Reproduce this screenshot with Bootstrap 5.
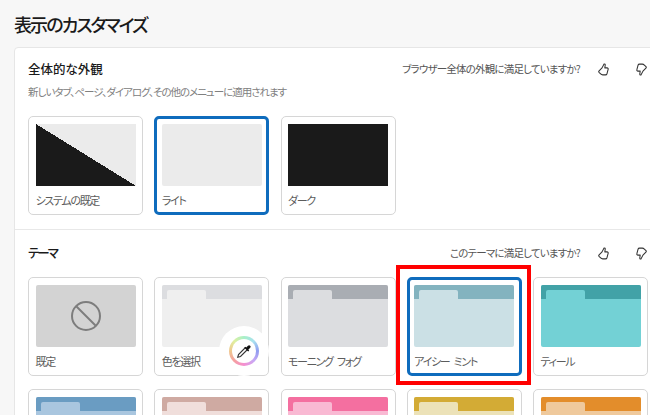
<!DOCTYPE html>
<html lang="ja">
<head>
  <meta charset="UTF-8" />
  <meta name="viewport" content="width=device-width,initial-scale=1" />
  <title>表示のカスタマイズ</title>
  <link href="https://cdn.jsdelivr.net/npm/bootstrap@5.3.0/dist/css/bootstrap.min.css" rel="stylesheet" />
  <style>
    html, body { height: 415px; overflow: hidden; }
    body {
      background: #f7f7f7;
      color: #1a1a1a;
      font-family: "Noto Sans CJK JP", "Liberation Sans", sans-serif;
      font-feature-settings: "palt";
      padding: 0 0 0 14px;
      width: 664px;
    }
    .page-title { font-size: 18px; font-weight: 500; letter-spacing: -1.9px; line-height: 28px; margin: 0; padding: 10px 0 9px; }
    .panel { background: #fff; border: 1px solid #e6e6e6; border-radius: 4px 0 0 0; width: 650px; }
    .panel-part { padding: 12px 15px 14px 13px; }
    .panel-part + .panel-part { border-top: 1px solid #e8e8e8; padding-top: 14px; }
    .part-title { font-size: 12.5px; font-weight: 500; line-height: 18px; margin: 0; }
    .part-title-tight { letter-spacing: -2px; }
    .part-note { color: #808080; font-size: 10.5px; letter-spacing: -1.03px; line-height: 16px; margin: 6px 0 0; }
    .ask { color: #555; font-size: 10.5px; letter-spacing: -.8px; line-height: 18px; }
    .thumbs { gap: 27px; margin: 0 1px 0 18px; }
    .thumbs svg { display: block; height: 13px; width: 11px; }
    .tiles { display: grid; grid-template-columns: repeat(5, 115px); column-gap: 11.25px; row-gap: 13px; margin-top: 15px; }
    .tiles-top { margin-top: 16px; }
    .tile { background: #fff; border: 1px solid #d6d6d6; border-radius: 5px; height: 99px; padding: 7px 6.5px; position: relative; }
    .tile-on { border: 3px solid #0f6cbd; padding: 5px 4.5px; }
    .tile-img { border-radius: 2px; height: 62px; overflow: hidden; }
    .tile-name { color: #5c5c5c; font-size: 11px; letter-spacing: -1.3px; line-height: 16px; margin-top: 6px; white-space: nowrap; word-spacing: 3px; }
    .img-system { background: linear-gradient(to top right, #1a1a1a 50%, #ebebeb 50%); border-radius: 0; }
    .img-light { background: #ebebeb; }
    .img-dark { background: #1a1a1a; border-radius: 0; }
    .img-none { align-items: center; background: #d3d3d3; display: flex; justify-content: center; }
    .img-none svg { height: 32px; width: 32px; }
    .folder-band { height: 14px; padding: 5px 0 0 5px; }
    .folder-tab { border-radius: 2px 2px 0 0; height: 9px; width: 39px; }
    .picker-cut { background: #fff; border-radius: 50%; height: 50px; position: absolute; right: -1px; bottom: -1px; width: 50px; }
    .picker-ring {
      align-items: center;
      background: conic-gradient(#a8f0c8, #a8e0f0, #8f9cf0, #c8a8f5, #f58fd0, #f5a0a0, #f0c890, #e0f0a0, #a8f0c8);
      border-radius: 50%;
      display: flex;
      height: 30px;
      justify-content: center;
      left: 10px;
      position: absolute;
      top: 10px;
      width: 30px;
    }
    .picker-eye { align-items: center; background: #fff; border-radius: 50%; display: flex; height: 24px; justify-content: center; width: 24px; }
    .picker-eye svg { height: 16px; width: 16px; }
    .red-box { border: 4px solid #f00; bottom: -12px; left: -13.5px; pointer-events: none; position: absolute; right: -12.5px; top: -15px; }
  </style>
</head>
<body>
  <h1 class="page-title">表示のカスタマイズ</h1>
  <div class="panel">
    <section class="panel-part">
      <div class="d-flex justify-content-between align-items-center">
        <h2 class="part-title">全体的な外観</h2>
        <div class="d-flex align-items-center">
          <span class="ask">ブラウザー全体の外観に満足していますか?</span>
          <div class="d-flex thumbs">
            <svg viewBox="0 0 13 16" fill="none" stroke="#333" stroke-width="1.3" stroke-linejoin="round"><path d="M7.2 1.2c1-.3 1.6.5 1.4 1.6L8.1 6h2.8c1 0 1.6.9 1.3 1.8l-1.4 5.4c-.3.9-1 1.4-1.9 1.4H5.5c-1 0-1.8-.4-2.5-1.1L1 11.500c-.5-.6-.4-1.400.1-1.900l3.600-3.600z"/></svg>
            <svg viewBox="0 0 13 16" fill="none" stroke="#333" stroke-width="1.3" stroke-linejoin="round"><path d="M5.800 14.800c-1 .3-1.600-.5-1.400-1.600l.5-3.200H2.100c-1 0-1.600-.9-1.300-1.800L2.200 2.800c.3-.9 1-1.400 1.900-1.400h3.400c1 0 1.800.4 2.500 1.100l2 2c.5.6.4 1.400-.1 1.900l-3.600 3.600z"/></svg>
          </div>
        </div>
      </div>
      <p class="part-note">新しいタブ、ページ、ダイアログ、その他のメニューに適用されます</p>
      <div class="tiles tiles-top">
        <div class="tile"><div class="tile-img img-system"></div><div class="tile-name">システムの既定</div></div>
        <div class="tile tile-on"><div class="tile-img img-light"></div><div class="tile-name">ライト</div></div>
        <div class="tile"><div class="tile-img img-dark"></div><div class="tile-name">ダーク</div></div>
      </div>
    </section>
    <section class="panel-part">
      <div class="d-flex justify-content-between align-items-center">
        <h2 class="part-title part-title-tight">テーマ</h2>
        <div class="d-flex align-items-center">
          <span class="ask">このテーマに満足していますか?</span>
          <div class="d-flex thumbs">
            <svg viewBox="0 0 13 16" fill="none" stroke="#333" stroke-width="1.3" stroke-linejoin="round"><path d="M7.2 1.2c1-.3 1.6.5 1.4 1.6L8.1 6h2.8c1 0 1.6.9 1.3 1.8l-1.4 5.4c-.3.9-1 1.4-1.9 1.4H5.5c-1 0-1.8-.4-2.5-1.1L1 11.500c-.5-.6-.4-1.400.1-1.900l3.600-3.600z"/></svg>
            <svg viewBox="0 0 13 16" fill="none" stroke="#333" stroke-width="1.3" stroke-linejoin="round"><path d="M5.800 14.800c-1 .3-1.600-.5-1.400-1.600l.5-3.200H2.100c-1 0-1.600-.9-1.300-1.800L2.200 2.800c.3-.9 1-1.400 1.900-1.400h3.400c1 0 1.800.4 2.500 1.100l2 2c.5.6.4 1.400-.1 1.900l-3.600 3.600z"/></svg>
          </div>
        </div>
      </div>
      <div class="tiles" id="themes"></div>
    </section>
  </div>
  <script src="https://cdn.jsdelivr.net/npm/bootstrap@5.3.0/dist/js/bootstrap.bundle.min.js"></script>
  <script>
    // band colour, body colour, name
    var themes = [
      ['#dcdde0', '#efefef', '色を選択'],
      ['#a9adb3', '#dcdde0', 'モーニング フォグ'],
      ['#83b3bf', '#cbe0e5', 'アイシー ミント'],
      ['#42a2a7', '#73d1d5', 'ティール'],
      ['#6a9cc2', '#a9c6df', ''],
      ['#cfaaa2', '#f0dedb', ''],
      ['#f46fa0', '#f9b9d3', ''],
      ['#d3ab35', '#ece2b8', ''],
      ['#e38d2b', '#efc99c', '']
    ];
    var html = '<div class="tile"><div class="tile-img img-none"><svg viewBox="0 0 32 32" fill="none" stroke="#7d7d7d" stroke-width="2"><circle cx="16" cy="16" r="14"/><path d="M6 6l20 20"/></svg></div><div class="tile-name">既定</div></div>';
    themes.forEach(function (t, i) {
      var picker = i === 0 ? '<div class="picker-cut"><div class="picker-ring"><div class="picker-eye"><svg viewBox="0 0 16 16"><path d="M9.500 4.500l-7 7-.8 2.800 2.800-.8 7-7" fill="#fff" stroke="#333" stroke-width="1.100"/><path d="M8.300 4.700l1-1 .9.900L12 2.700a1.500 1.500 0 0 1 2.200 2.100l-1.900 1.900.9.900-1 1z" fill="#111"/></svg></div></div></div>' : '';
      var red = i === 2 ? '<div class="red-box"></div>' : '';
      html += '<div class="tile' + (i === 2 ? ' tile-on' : '') + '">' +
        '<div class="tile-img" style="background:' + t[1] + '"><div class="folder-band" style="background:' + t[0] + '"><div class="folder-tab" style="background:' + t[1] + '"></div></div></div>' +
        '<div class="tile-name">' + t[2] + '</div>' + picker + red + '</div>';
    });
    document.getElementById('themes').innerHTML = html;
  </script>
</body>
</html>
